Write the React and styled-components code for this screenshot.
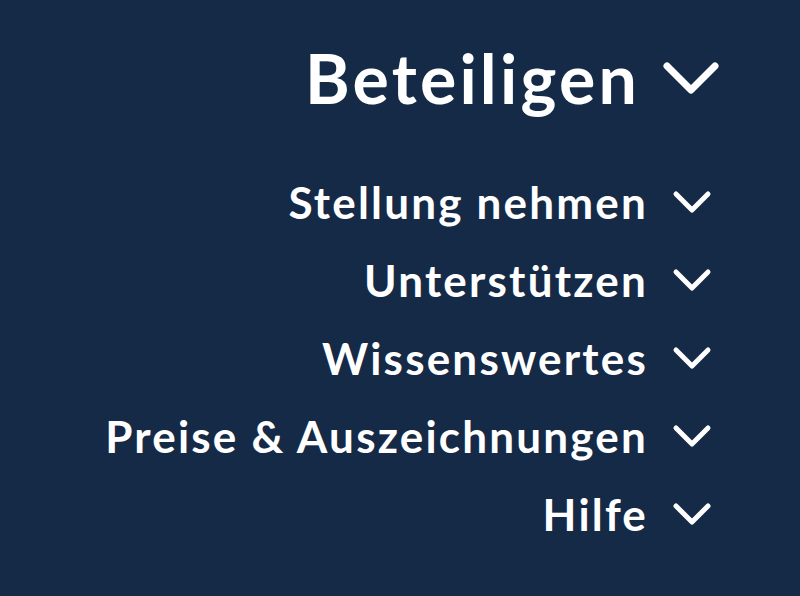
import styled, { createGlobalStyle } from 'styled-components'

const Global = createGlobalStyle`
  html, body {
    margin: 0;
    padding: 0;
    background: #152a47;
  }
  body {
    font-family: Lato, 'Liberation Sans', sans-serif;
  }
`

const Menu = styled.nav`
  width: 800px;
  height: 596px;
  box-sizing: border-box;
  padding: 38px 80px 0 0;
  display: flex;
  flex-direction: column;
  align-items: flex-end;
  color: #ffffff;
`

const Title = styled.button`
  all: unset;
  display: flex;
  align-items: center;
  gap: 22px;
  font-size: 68px;
  font-weight: 700;
  letter-spacing: 3.2px;
  line-height: 80px;
  cursor: pointer;
`

const Items = styled.ul`
  list-style: none;
  margin: 60px 0 0;
  padding: 0 8px 0 0;
  display: flex;
  flex-direction: column;
  align-items: flex-end;
  gap: 30px;
`

const Item = styled.li`
  display: flex;
  align-items: center;
  gap: 24px;
  font-size: 44px;
  font-weight: 700;
  letter-spacing: 2.2px;
  line-height: 48px;
  cursor: pointer;
`

const Chevron = ({ big }) =>
  big ? (
    <svg width="58" height="34" viewBox="0 0 58 34">
      <polyline points="5,5 29,29 53,5" fill="none" stroke="#fff" strokeWidth="7" strokeLinecap="round" strokeLinejoin="round" />
    </svg>
  ) : (
    <svg width="40" height="24" viewBox="0 0 40 24">
      <polyline points="4,4 20,20 36,4" fill="none" stroke="#fff" strokeWidth="5" strokeLinecap="round" strokeLinejoin="round" />
    </svg>
  )

const links = ['Stellung nehmen', 'Unterstützen', 'Wissenswertes', 'Preise & Auszeichnungen', 'Hilfe']

export default function App() {
  return (
    <>
      <Global />
      <Menu>
        <Title>
          Beteiligen
          <Chevron big />
        </Title>
        <Items>
          {links.map((l) => (
            <Item key={l}>
              {l}
              <Chevron />
            </Item>
          ))}
        </Items>
      </Menu>
    </>
  )
}
